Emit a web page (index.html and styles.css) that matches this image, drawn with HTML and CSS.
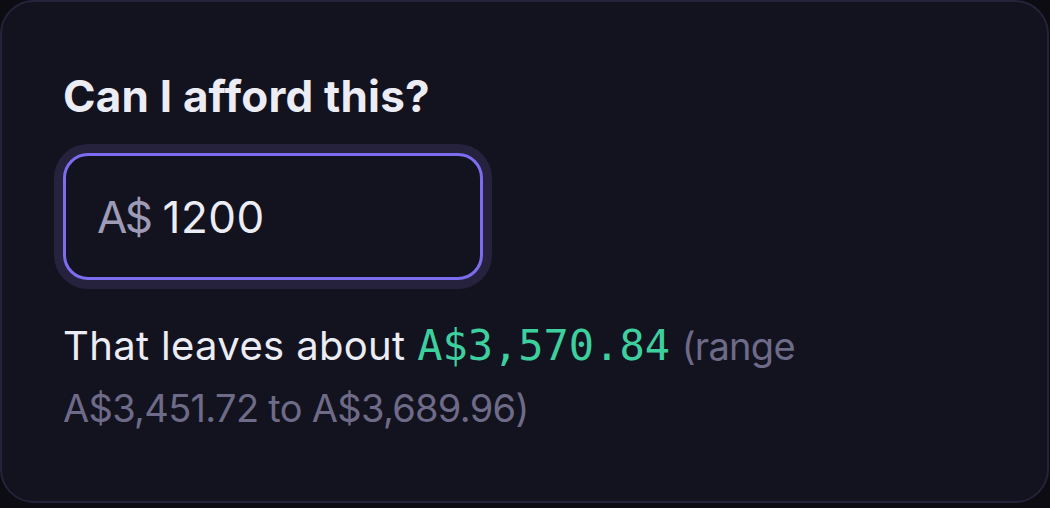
FILE: index.html
```html
<!DOCTYPE html>
<html lang="en">
<head>
<meta charset="utf-8">
<title>Can I afford this?</title>
<link rel="stylesheet" href="styles.css">
</head>
<body>
<section class="card">
  <h2 class="title">Can I afford this?</h2>
  <label class="field">
    <span class="prefix">A$</span>
    <span class="value">1200</span>
  </label>
  <p class="result">That leaves about <span class="amount">A$3,570.84</span> <span class="range">(range A$3,451.72 to A$3,689.96)</span></p>
</section>
</body>
</html>
```

FILE: styles.css
```css
html, body {
  margin: 0;
  padding: 0;
  background: #0c0c12;
}
body {
  width: 1050px;
  height: 508px;
  overflow: hidden;
  font-family: Inter, "Noto Sans", sans-serif;
}
.card {
  box-sizing: border-box;
  width: 1049px;
  height: 503px;
  border: 2px solid #25233a;
  border-radius: 34px;
  background: #13131f;
  padding: 66px 60px 0 61px;
  display: flex;
  flex-direction: column;
  align-items: flex-start;
}
.title {
  margin: 0;
  font-size: 44px;
  line-height: 56px;
  font-weight: 700;
  color: #ececf4;
  letter-spacing: 0.2px;
}
.field {
  box-sizing: border-box;
  margin-top: 29px;
  width: 420px;
  height: 127px;
  border: 3px solid #7c6cf0;
  border-radius: 25px;
  box-shadow: 0 0 0 9px #26223e;
  display: flex;
  align-items: center;
  gap: 12px;
  padding-left: 31px;
  font-size: 44px;
  background: #13131f;
}
.prefix { color: #9d9bb6; letter-spacing: -2.5px; }
.value { color: #ececf4; letter-spacing: 0.5px; }
.result {
  margin: 35px 0 0;
  font-size: 40px;
  line-height: 62px;
  color: #ececf4;
  letter-spacing: 0.35px;
  max-width: 880px;
}
.amount {
  font-family: "DejaVu Sans Mono", monospace;
  color: #3ecf9f;
  font-weight: 400;
  font-size: 42px;
  line-height: 1;
  letter-spacing: 0;
}
.range {
  color: #6e6b88;
  font-size: 38px;
  letter-spacing: -0.7px;
}
```
